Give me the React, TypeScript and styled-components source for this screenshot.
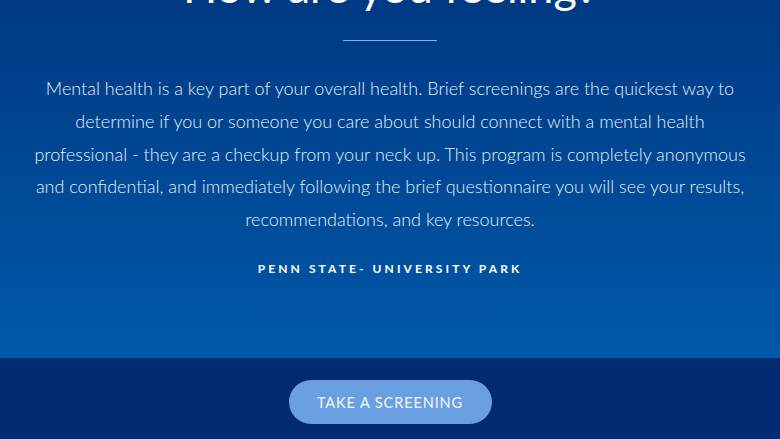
import React from "react";
import styled, { createGlobalStyle } from "styled-components";

const Global = createGlobalStyle`
  html, body { margin: 0; padding: 0; }
  body { font-family: Lato, "Open Sans", sans-serif; background: #012a70; overflow: hidden; }
  * { box-sizing: border-box; }
`;

const Page = styled.div`
  width: 780px;
  height: 439px;
  overflow: hidden;
  display: flex;
  flex-direction: column;
`;

const Hero = styled.section`
  height: 358px;
  flex: none;
  background: linear-gradient(180deg, #003984 0%, #0059a8 100%);
  border-bottom: 1px solid #0a5cab;
  display: flex;
  flex-direction: column;
  align-items: center;
  padding: 0 30px;
`;

const Title = styled.h1`
  margin: -42px 0 0;
  font-family: Lato, sans-serif;
  font-weight: 400;
  font-size: 45px;
  line-height: 56px;
  color: #ffffff;
  text-align: center;
  white-space: nowrap;
`;

const Divider = styled.hr`
  width: 94px;
  height: 1px;
  border: 0;
  background: #8eb0e3;
  margin: 26px 0 0;
`;

const Body = styled.p`
  margin: 31px 0 0;
  font-family: Lato, sans-serif;
  font-weight: 300;
  font-size: 18px;
  line-height: 32.75px;
  color: #e6edf8;
  text-align: center;
`;

const Campus = styled.div`
  margin-top: 25px;
  font-family: Lato, sans-serif;
  font-weight: 700;
  font-size: 12px;
  letter-spacing: 3.1px;
  color: #ffffff;
  text-transform: uppercase;
`;

const Band = styled.section`
  flex: 1;
  background: #012a70;
  display: flex;
  justify-content: center;
  padding-top: 22px;
`;

const CTA = styled.button`
  width: 203px;
  height: 44px;
  border: 0;
  border-radius: 22px;
  background: #6a9fe2;
  color: #f2f6fc;
  font-family: Lato, sans-serif;
  font-weight: 400;
  font-size: 14.5px;
  letter-spacing: 0.9px;
  text-transform: uppercase;
  cursor: pointer;
  padding: 0;
`;

export default function App() {
  return (
    <Page>
      <Global />
      <Hero>
        <Title>How are you feeling?</Title>
        <Divider />
        <Body>
          Mental health is a key part of your overall health. Brief screenings are the quickest way to determine if you or someone you care about should connect with a mental health professional - they are a checkup from your neck up. This program is completely anonymous and confidential, and immediately following the brief questionnaire you will see your results, recommendations, and key resources.
        </Body>
        <Campus>Penn State- University Park</Campus>
      </Hero>
      <Band>
        <CTA>Take a Screening</CTA>
      </Band>
    </Page>
  );
}
